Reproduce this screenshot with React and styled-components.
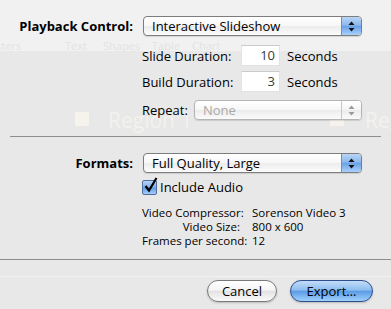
import React from 'react';
import styled, { createGlobalStyle, css } from 'styled-components';

const Global = createGlobalStyle`
  html, body { margin: 0; padding: 0; }
  body {
    background: #e8e8e8;
    font-family: "Open Sans", "DejaVu Sans", sans-serif;
    color: #000;
  }
`;

const Sheet = styled.div`
  position: relative;
  width: 391px;
  height: 309px;
  overflow: hidden;
  background: linear-gradient(#f1f1f1 0, #f1f1f1 51px, #e8e8e8 51px);
`;

const Ghost = styled.div`
  position: absolute;
  inset: 0;
  pointer-events: none;
`;

const GhostLabel = styled.span`
  position: absolute;
  font-size: 11px;
  line-height: 12px;
  color: #e3e3e3;
  white-space: nowrap;
`;

const GhostRegion = styled.span`
  position: absolute;
  font-size: 21px;
  line-height: 24px;
  color: #f3f2ee;
  white-space: nowrap;
`;

const GhostSwatch = styled.span`
  position: absolute;
  width: 14px;
  height: 14px;
  background: #f5f3ec;
`;

const GhostLine = styled.div`
  position: absolute;
  left: 0;
  right: 0;
  height: 1px;
  background: #f2f2f2;
`;

const Content = styled.div`
  position: relative;
  display: flex;
  flex-direction: column;
  padding-top: 16px;
`;

const Row = styled.div`
  display: flex;
  align-items: center;
  margin-top: ${p => p.$mt || 0}px;
  margin-left: ${p => p.$ml || 0}px;
`;

const MainLabel = styled.div`
  width: 133px;
  text-align: right;
  font-weight: bold;
  font-size: 13px;
  line-height: 18px;
  margin-right: 10px;
  white-space: nowrap;
`;

const SubLabel = styled.div`
  width: ${p => p.$w}px;
  font-size: 13px;
  line-height: 18px;
  white-space: nowrap;
`;

const PopupBox = styled.div`
  box-sizing: border-box;
  width: ${p => p.$w}px;
  height: 20px;
  display: flex;
  border: 1px solid ${p => (p.$disabled ? '#b4b4b4' : '#7d7d7d')};
  border-radius: 4px;
  overflow: hidden;
  background: linear-gradient(#ffffff 0%, #f7f7f7 50%, #ececec 51%, #fbfbfb 100%);
  box-shadow: 0 1px 1px rgba(0, 0, 0, 0.12);
`;

const PopupText = styled.div`
  flex: 1;
  font-size: 13px;
  line-height: 18px;
  padding-left: 8px;
  color: ${p => (p.$disabled ? '#a8a8a8' : '#000')};
  white-space: nowrap;
`;

const PopupArrows = styled.div`
  width: 19px;
  display: flex;
  align-items: center;
  justify-content: center;
  border-left: 1px solid ${p => (p.$disabled ? '#c8c8c8' : '#6d8fbf')};
  ${p =>
    p.$disabled
      ? css`
          background: linear-gradient(#ffffff 0%, #f5f5f5 50%, #ebebeb 51%, #fafafa 100%);
        `
      : css`
          background: linear-gradient(#b9d5f5 0%, #8db8ec 45%, #6aa2e6 52%, #a9d1fb 100%);
        `}
`;

const Popup = ({ width, children, disabled }) => (
  <PopupBox $w={width} $disabled={disabled}>
    <PopupText $disabled={disabled}>{children}</PopupText>
    <PopupArrows $disabled={disabled}>
      <svg width="7" height="11" viewBox="0 0 7 11">
        <path d="M3.5 0.5 L6.5 4 L0.5 4 Z" fill={disabled ? '#9a9a9a' : '#111'} />
        <path d="M3.5 10.5 L6.5 7 L0.5 7 Z" fill={disabled ? '#9a9a9a' : '#111'} />
      </svg>
    </PopupArrows>
  </PopupBox>
);

const NumberField = styled.div`
  box-sizing: border-box;
  width: 39px;
  height: 21px;
  background: #fff;
  border: 1px solid #e2e2e2;
  border-top-color: #cbcbcb;
  font-size: 13px;
  line-height: 19px;
  text-align: right;
  padding-right: 4px;
  color: #3a3a3a;
  margin-right: 7px;
`;

const Unit = styled.div`
  font-size: 13px;
  line-height: 18px;
`;

const Separator = styled.div`
  height: 1px;
  background: #8e8e8e;
  margin: ${p => p.$m};
`;

const CheckBox = styled.div`
  box-sizing: border-box;
  width: 15px;
  height: 15px;
  border: 1px solid #4c6f9e;
  border-radius: 2px;
  background: linear-gradient(#b5d3f7 0%, #7fb0ea 48%, #5f9be3 52%, #a6cefa 100%);
  position: relative;
  margin-right: 3px;
`;

const CheckMark = styled.svg`
  position: absolute;
  left: 1px;
  top: -4px;
`;

const CheckLabel = styled.div`
  font-size: 13px;
  line-height: 15px;
`;

const InfoGrid = styled.div`
  display: grid;
  grid-template-columns: 98px auto;
  column-gap: 12px;
  margin: 11px 0 0 142px;
  font-size: 11.5px;
  line-height: 14px;
`;

const InfoKey = styled.div`
  text-align: right;
  white-space: nowrap;
`;

const InfoValue = styled.div`
  white-space: nowrap;
`;

const ButtonBar = styled.div`
  display: flex;
  justify-content: flex-end;
  gap: 13px;
  padding: 20px 18px 0 0;
`;

const Button = styled.div`
  box-sizing: border-box;
  width: ${p => p.$w}px;
  height: 22px;
  border-radius: 11px;
  font-size: 13px;
  line-height: 20px;
  text-align: center;
  ${p =>
    p.$primary
      ? css`
          border: 1px solid #2c4f8f;
          background: linear-gradient(#c4dcf8 0%, #8dbdf0 45%, #5b9ce6 52%, #9fd0fc 100%);
        `
      : css`
          border: 1px solid #7a7a7a;
          background: linear-gradient(#ffffff 0%, #f5f5f5 45%, #e3e3e3 52%, #fafafa 100%);
        `}
  box-shadow: 0 1px 2px rgba(0, 0, 0, 0.2);
`;

export default function App() {
  return (
    <>
      <Global />
      <Sheet>
        <Ghost>
          <GhostLabel style={{ left: -4, top: 40 }}>sters</GhostLabel>
          <GhostLabel style={{ left: 65, top: 40 }}>Text</GhostLabel>
          <GhostLabel style={{ left: 103, top: 40 }}>Shapes</GhostLabel>
          <GhostLabel style={{ left: 152, top: 40 }}>Table</GhostLabel>
          <GhostLabel style={{ left: 192, top: 40 }}>Chart</GhostLabel>
          <GhostSwatch style={{ left: 75, top: 112 }} />
          <GhostRegion style={{ left: 108, top: 108 }}>Region 1</GhostRegion>
          <GhostSwatch style={{ left: 330, top: 112 }} />
          <GhostRegion style={{ left: 365, top: 108 }}>Region 2</GhostRegion>
          <GhostLine style={{ top: 276 }} />
        </Ghost>
        <Content>
          <Row>
            <MainLabel>Playback Control:</MainLabel>
            <Popup width={219}>Interactive Slideshow</Popup>
          </Row>
          <Row $mt={9} $ml={142}>
            <SubLabel $w={99}>Slide Duration:</SubLabel>
            <NumberField>10</NumberField>
            <Unit>Seconds</Unit>
          </Row>
          <Row $mt={5} $ml={142}>
            <SubLabel $w={99}>Build Duration:</SubLabel>
            <NumberField>3</NumberField>
            <Unit>Seconds</Unit>
          </Row>
          <Row $mt={8} $ml={142}>
            <SubLabel $w={52}>Repeat:</SubLabel>
            <Popup width={168} disabled>None</Popup>
          </Row>
          <Separator $m="16px 10px 0" />
          <Row $mt={16}>
            <MainLabel>Formats:</MainLabel>
            <Popup width={219}>Full Quality, Large</Popup>
          </Row>
          <Row $mt={7} $ml={142}>
            <CheckBox>
              <CheckMark width="14" height="16" viewBox="0 0 14 16">
                <path d="M1.5 9 L5 13.5 L12.5 1" fill="none" stroke="#000" strokeWidth="2.2" />
              </CheckMark>
            </CheckBox>
            <CheckLabel>Include Audio</CheckLabel>
          </Row>
          <InfoGrid>
            <InfoKey>Video Compressor:</InfoKey>
            <InfoValue>Sorenson Video 3</InfoValue>
            <InfoKey>Video Size:</InfoKey>
            <InfoValue>800 x 600</InfoValue>
            <InfoKey>Frames per second:</InfoKey>
            <InfoValue>12</InfoValue>
          </InfoGrid>
          <Separator $m="11px 0 0" />
          <ButtonBar>
            <Button $w={70}>Cancel</Button>
            <Button $w={83} $primary>Export…</Button>
          </ButtonBar>
        </Content>
      </Sheet>
    </>
  );
}
